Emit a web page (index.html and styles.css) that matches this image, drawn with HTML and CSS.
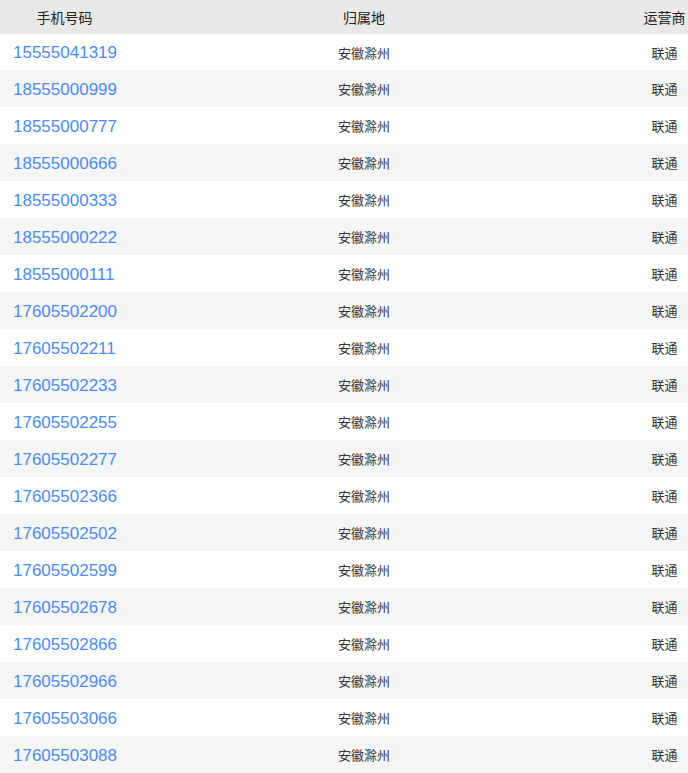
FILE: index.html
```html
<!DOCTYPE html>
<html lang="zh-CN">
<head>
<meta charset="utf-8">
<link rel="stylesheet" href="styles.css">
</head>
<body>
<div class="table">
  <div class="row head"><div class="c1">手机号码</div><div class="c2">归属地</div><div class="c3">运营商</div></div>
  <div class="row first"><div class="c1 num">15555041319</div><div class="c2">安徽滁州</div><div class="c3">联通</div></div>
  <div class="row"><div class="c1 num">18555000999</div><div class="c2">安徽滁州</div><div class="c3">联通</div></div>
  <div class="row"><div class="c1 num">18555000777</div><div class="c2">安徽滁州</div><div class="c3">联通</div></div>
  <div class="row"><div class="c1 num">18555000666</div><div class="c2">安徽滁州</div><div class="c3">联通</div></div>
  <div class="row"><div class="c1 num">18555000333</div><div class="c2">安徽滁州</div><div class="c3">联通</div></div>
  <div class="row"><div class="c1 num">18555000222</div><div class="c2">安徽滁州</div><div class="c3">联通</div></div>
  <div class="row"><div class="c1 num">18555000111</div><div class="c2">安徽滁州</div><div class="c3">联通</div></div>
  <div class="row"><div class="c1 num">17605502200</div><div class="c2">安徽滁州</div><div class="c3">联通</div></div>
  <div class="row"><div class="c1 num">17605502211</div><div class="c2">安徽滁州</div><div class="c3">联通</div></div>
  <div class="row"><div class="c1 num">17605502233</div><div class="c2">安徽滁州</div><div class="c3">联通</div></div>
  <div class="row"><div class="c1 num">17605502255</div><div class="c2">安徽滁州</div><div class="c3">联通</div></div>
  <div class="row"><div class="c1 num">17605502277</div><div class="c2">安徽滁州</div><div class="c3">联通</div></div>
  <div class="row"><div class="c1 num">17605502366</div><div class="c2">安徽滁州</div><div class="c3">联通</div></div>
  <div class="row"><div class="c1 num">17605502502</div><div class="c2">安徽滁州</div><div class="c3">联通</div></div>
  <div class="row"><div class="c1 num">17605502599</div><div class="c2">安徽滁州</div><div class="c3">联通</div></div>
  <div class="row"><div class="c1 num">17605502678</div><div class="c2">安徽滁州</div><div class="c3">联通</div></div>
  <div class="row"><div class="c1 num">17605502866</div><div class="c2">安徽滁州</div><div class="c3">联通</div></div>
  <div class="row"><div class="c1 num">17605502966</div><div class="c2">安徽滁州</div><div class="c3">联通</div></div>
  <div class="row"><div class="c1 num">17605503066</div><div class="c2">安徽滁州</div><div class="c3">联通</div></div>
  <div class="row"><div class="c1 num">17605503088</div><div class="c2">安徽滁州</div><div class="c3">联通</div></div>
</div>
</body>
</html>
```
FILE: styles.css
```css
html, body {
  margin: 0;
  padding: 0;
  background: #ffffff;
}
body {
  font-family: "Noto Sans CJK SC", "Liberation Sans", sans-serif;
  color: #333333;
}
.table {
  width: 688px;
}
.row {
  display: grid;
  grid-template-columns: 129px 470px 89px;
  height: 37px;
  align-items: center;
  font-size: 13px;
  background: #ffffff;
}
.row:nth-child(odd) {
  background: #f5f5f5;
}
.row.head {
  height: 34px;
  background: #e8e8e8;
  font-size: 14px;
  color: #222222;
}
.row.first {
  height: 36px;
}
.c1 {
  text-align: center;
}
.c1.num {
  text-align: left;
  padding-left: 13px;
  padding-top: 2px;
  font-family: "Liberation Sans", sans-serif;
  font-size: 17px;
  color: #4a8cf5;
}
.c2 {
  text-align: center;
}
.c3 {
  text-align: center;
  padding-left: 42px;
}
```
